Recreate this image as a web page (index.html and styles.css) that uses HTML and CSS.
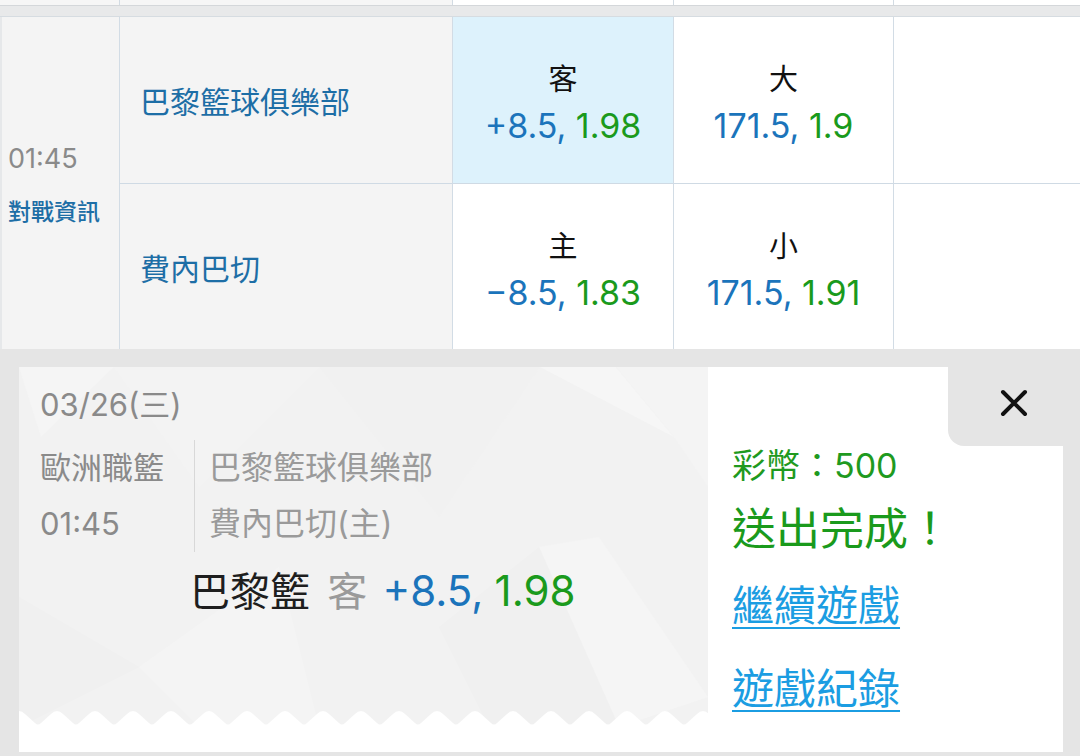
FILE: index.html
```html
<!DOCTYPE html>
<html lang="zh-Hant">
<head>
<meta charset="utf-8">
<title>送出完成</title>
<link rel="stylesheet" href="styles.css">
</head>
<body>
<div class="page">
  <div class="prev-row">
    <div class="pc pc0"></div>
    <div class="pc pc1"></div>
    <div class="pc pc2"></div>
    <div class="pc pc3"></div>
    <div class="pc pc4"></div>
  </div>
  <div class="band"></div>
  <div class="match">
    <div class="time-cell">
      <div class="time">01:45</div>
      <div class="info">對戰資訊</div>
    </div>
    <div class="team row1">巴黎籃球俱樂部</div>
    <div class="odd row1 selected">
      <div class="lbl">客</div>
      <div class="val"><span class="blue">+8.5,</span> <span class="green">1.98</span></div>
    </div>
    <div class="odd row1">
      <div class="lbl">大</div>
      <div class="val"><span class="blue">171.5,</span> <span class="green">1.9</span></div>
    </div>
    <div class="empty row1"></div>
    <div class="team">費內巴切</div>
    <div class="odd">
      <div class="lbl">主</div>
      <div class="val"><span class="blue">−8.5,</span> <span class="green">1.83</span></div>
    </div>
    <div class="odd">
      <div class="lbl">小</div>
      <div class="val"><span class="blue">171.5,</span> <span class="green">1.91</span></div>
    </div>
    <div class="empty"></div>
  </div>
  <div class="result-area">
    <div class="panel">
      <div class="left">
        <div class="ticket">
          <svg class="poly" viewBox="0 0 689 360" preserveAspectRatio="none" aria-hidden="true">
            <polygon points="0,0 95,0 22,70" fill="#f5f5f5"/>
            <polygon points="95,0 300,0 180,120" fill="#f3f3f3"/>
            <polygon points="521,0 597,0 655,70" fill="#f6f6f6"/>
            <polygon points="597,0 689,0 689,120 655,70" fill="#f4f4f4"/>
            <polygon points="300,0 521,0 420,150" fill="#f1f1f1"/>
            <polygon points="0,230 120,300 0,360" fill="#f0f0f0"/>
            <polygon points="120,300 260,200 300,360 180,360" fill="#f4f4f4"/>
            <polygon points="520,180 580,170 689,330 600,360" fill="#f5f5f5"/>
            <polygon points="420,260 520,180 600,360 470,360" fill="#f0f0f0"/>
          </svg>
          <div class="date">03/26(三)</div>
          <div class="info-row">
            <div class="league">
              <div>歐洲職籃</div>
              <div>01:45</div>
            </div>
            <div class="teams">
              <div>巴黎籃球俱樂部</div>
              <div>費內巴切(主)</div>
            </div>
          </div>
          <div class="bet"><span class="bet-team">巴黎籃</span> <span class="bet-side">客</span> <span class="blue">+8.5,</span> <span class="green">1.98</span></div>
          <svg class="zig" width="689" height="16" aria-hidden="true">
            <defs>
              <pattern id="zz" width="38" height="16" patternUnits="userSpaceOnUse">
                <path d="M0 0 Q3 0 6 3 L16 12 Q19 15 22 12 L32 3 Q35 0 38 0 V16 H0 Z" fill="#ffffff" transform="scale(1,1)"/>
              </pattern>
            </defs>
            <rect width="689" height="16" fill="url(#zz)"/>
          </svg>
        </div>
      </div>
      <div class="right">
        <button class="close" type="button" aria-label="關閉">
          <svg width="28" height="28" viewBox="0 0 28 28" aria-hidden="true">
            <path d="M3 3 L25 25 M25 3 L3 25" stroke="#111" stroke-width="4" stroke-linecap="round"/>
          </svg>
        </button>
        <div class="coins">彩幣：500</div>
        <div class="done">送出完成！</div>
        <a class="link first" href="#">繼續遊戲</a>
        <a class="link" href="#">遊戲紀錄</a>
      </div>
    </div>
  </div>
</div>
</body>
</html>
```
FILE: styles.css
```css
* { box-sizing: border-box; }

html, body {
  margin: 0;
  padding: 0;
  width: 1080px;
  height: 756px;
  overflow: hidden;
  background: #e5e5e5;
  font-family: "Inter", "Noto Sans CJK TC", sans-serif;
}

.page {
  width: 1080px;
  height: 756px;
  display: flex;
  flex-direction: column;
}

/* previous (cut-off) row */
.prev-row {
  height: 6px;
  display: grid;
  grid-template-columns: 119px 333px 221px 220px 1fr;
  border-bottom: 1px solid #d4d7da;
}
.pc { background: #f6f6f6; }
.pc1, .pc2, .pc3, .pc4 { border-left: 1px solid #d2dbe3; }
.pc2, .pc3, .pc4 { background: #ffffff; }

.band {
  height: 10px;
  background: #e8e9ea;
}

/* match table */
.match {
  display: grid;
  grid-template-columns: 119px 333px 221px 220px 1fr;
  grid-template-rows: 167px 165px;
  border-top: 1px solid #d6dce1;
  background: #ffffff;
}

.time-cell {
  grid-row: span 2;
  background: #f4f4f4;
  border-left: 2px solid #e6e8ea;
  padding-left: 6px;
  display: flex;
  flex-direction: column;
  justify-content: center;
}
.time {
  font-size: 27px;
  line-height: 36px;
  color: #8a8a8a;
}
.info {
  margin-top: 21px;
  font-size: 23px;
  line-height: 28px;
  color: #1d6ea6;
  font-weight: 500;
}

.team, .odd, .empty {
  border-left: 1px solid #d2dce5;
}
.row1 { border-bottom: 1px solid #cfdae4; }

.team {
  background: #f4f4f4;
  display: flex;
  align-items: center;
  padding-left: 20px;
  font-size: 30px;
  color: #1d6ea6;
}

.odd {
  display: flex;
  flex-direction: column;
  align-items: center;
  justify-content: center;
  padding-top: 8px;
}
.odd.selected { background: #ddf2fc; }
.lbl {
  font-size: 29px;
  line-height: 44px;
  color: #111111;
}
.val {
  font-size: 34px;
  line-height: 48px;
  white-space: nowrap;
}

.blue { color: #1b74bb; }
.green { color: #1a9a1c; }

/* result panel */
.result-area {
  flex: 1;
  background: #e5e5e5;
  padding: 18px 17px 4px 19px;
}

.panel {
  height: 385px;
  background: #ffffff;
  display: flex;
}

.left {
  width: 689px;
  display: flex;
  flex-direction: column;
}

.ticket {
  position: relative;
  height: 360px;
  background: #f2f2f2;
  padding: 20px 0 0 21px;
}
.poly {
  position: absolute;
  inset: 0;
  width: 100%;
  height: 100%;
  z-index: 0;
}
.zig {
  position: absolute;
  left: 0;
  bottom: 0;
  z-index: 1;
}
.date, .info-row, .bet {
  position: relative;
  z-index: 2;
}

.date {
  font-size: 31px;
  line-height: 36px;
  color: #8a8a8a;
}

.info-row {
  margin-top: 17px;
  display: flex;
}
.league {
  width: 155px;
  border-right: 1px solid #d8d8d8;
  font-size: 31px;
  line-height: 56px;
  color: #8a8a8a;
}
.teams {
  padding-left: 14px;
  font-size: 32px;
  line-height: 56px;
  color: #9a9a9a;
}

.bet {
  margin-top: 14px;
  padding-left: 150px;
  font-size: 40px;
  line-height: 50px;
  white-space: nowrap;
}
.bet .blue, .bet .green { font-size: 42px; }
.bet-team { color: #1e1e1e; margin-right: 6px; }
.bet-side { color: #9a9a9a; margin-right: 4px; }

.right {
  flex: 1;
  display: flex;
  flex-direction: column;
  align-items: flex-start;
  padding-left: 24px;
}

.close {
  align-self: flex-end;
  width: 115px;
  height: 79px;
  margin: 0;
  border: 0;
  background: #e5e5e5;
  border-bottom-left-radius: 16px;
  display: flex;
  align-items: center;
  justify-content: center;
  padding: 0 0 7px 17px;
}

.coins {
  font-size: 34px;
  line-height: 40px;
  color: #1f9a1f;
}
.done {
  margin-top: 16px;
  font-size: 44px;
  line-height: 54px;
  color: #1a9a1c;
}
.link {
  font-size: 42px;
  line-height: 54px;
  color: #1b9de2;
  text-decoration: underline;
  text-decoration-thickness: 2px;
  text-underline-offset: 6px;
}
.link.first { margin-top: 23px; }
.link + .link { margin-top: 29px; }
```
